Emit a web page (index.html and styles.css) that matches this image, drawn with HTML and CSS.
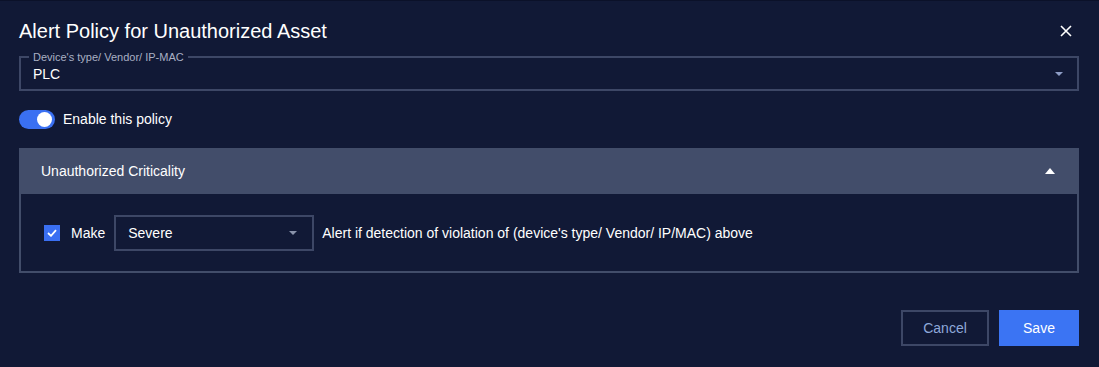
FILE: index.html
```html
<!DOCTYPE html>
<html>
<head>
    <title>Alert Policy for Unauthorized Asset</title>
    <link rel="stylesheet" href="styles.css">
</head>
<body>
    <div class="dialog">
        <div class="dialog-header">
            <h2 class="dialog-title">Alert Policy for Unauthorized Asset</h2>
            <button type="button" class="close-button" aria-label="Close">
                <svg width="12" height="12" viewBox="0 0 12 12">
                    <path d="M1 1 L11 11 M11 1 L1 11" stroke="#ffffff" stroke-width="1.6" fill="none"/>
                </svg>
            </button>
        </div>

        <fieldset class="select-field">
            <legend>Device's type/ Vendor/ IP-MAC</legend>
            <div class="select-row">
                <span>PLC</span>
                <span class="caret"></span>
            </div>
        </fieldset>

        <!-- Enable toggle -->
        <label class="toggle-row">
            <span class="toggle"><span class="knob"></span></span>
            <span>Enable this policy</span>
        </label>

        <div class="panel">
            <div class="panel-header">
                <span>Unauthorized Criticality</span>
                <span class="caret-up"></span>
            </div>
            <div class="panel-body">
                <span class="checkbox">
                    <svg width="10" height="8" viewBox="0 0 10 8">
                        <path d="M1 4 L4 6.8 L9 1.2" stroke="#ffffff" stroke-width="1.8" fill="none"/>
                    </svg>
                </span>
                <span class="make-label">Make</span>
                <div class="small-select">
                    <span>Severe</span>
                    <span class="caret gray"></span>
                </div>
                <span>Alert if detection of violation of (device's type/ Vendor/ IP/MAC) above</span>
            </div>
        </div>

        <div class="dialog-footer">
            <button type="button" class="cancel-button">Cancel</button>
            <button type="button" class="save-button">Save</button>
        </div>
    </div>
</body>
</html>
```

FILE: styles.css
```css
body {
    font-family: "Liberation Sans", Arial, sans-serif;
    margin: 0;
    padding: 0;
    background-color: #111936;
    color: #ffffff;
    font-size: 14px;
}

.dialog {
    border-top: 1px solid #0b1129;
    padding: 18px 20px 21px 19px;
}

.dialog-header {
    display: flex;
    justify-content: space-between;
    align-items: center;
    height: 24px;
}

.dialog-title {
    margin: 0;
    font-size: 20px;
    font-weight: normal;
    line-height: 24px;
}

.close-button {
    background: none;
    border: none;
    padding: 0;
    margin-right: 7px;
    width: 12px;
    height: 12px;
    display: flex;
    cursor: pointer;
}

.select-field {
    margin: 8px 0 0 0;
    padding: 3px 14px 7px 12px;
    border: 2px solid #3d4766;
    min-width: 0;
}

.select-field legend {
    font-size: 11px;
    line-height: 12px;
    color: #a9b0c4;
    padding: 0 4px;
    margin-left: -4px;
}

.select-row {
    display: flex;
    justify-content: space-between;
    align-items: center;
    line-height: 16px;
}

.caret {
    width: 0;
    height: 0;
    border-left: 4px solid transparent;
    border-right: 4px solid transparent;
    border-top: 4px solid #8e9dc6;
}

.caret.gray {
    border-top-color: #8a93ab;
}

.toggle-row {
    display: flex;
    align-items: center;
    gap: 8px;
    margin-top: 18px;
    height: 20px;
}

.toggle {
    width: 36px;
    height: 19px;
    border-radius: 10px;
    background-color: #3a70f2;
    display: flex;
    align-items: center;
    justify-content: flex-end;
    padding-right: 3px;
    box-sizing: border-box;
}

.knob {
    width: 15px;
    height: 15px;
    border-radius: 50%;
    background-color: #ffffff;
}

.panel {
    margin-top: 19px;
}

.panel-header {
    height: 46px;
    background-color: #424d6a;
    display: flex;
    justify-content: space-between;
    align-items: center;
    padding: 0 24px 0 22px;
}

.caret-up {
    width: 0;
    height: 0;
    border-left: 5px solid transparent;
    border-right: 5px solid transparent;
    border-bottom: 6px solid #ffffff;
}

.panel-body {
    border: 2px solid #424d6a;
    border-top: none;
    padding: 21px 23px 20px 23px;
    display: flex;
    align-items: center;
}

.checkbox {
    width: 16px;
    height: 16px;
    background-color: #3a6ff2;
    display: flex;
    align-items: center;
    justify-content: center;
    margin-right: 11px;
}

.make-label {
    margin-right: 9px;
}

.small-select {
    width: 200px;
    height: 36px;
    box-sizing: border-box;
    border: 2px solid #3d4766;
    display: flex;
    justify-content: space-between;
    align-items: center;
    padding: 0 15px 0 12px;
    margin-right: 8px;
}

.dialog-footer {
    display: flex;
    justify-content: flex-end;
    gap: 10px;
    margin-top: 37px;
}

.dialog-footer button {
    height: 36px;
    font-family: "Liberation Sans", Arial, sans-serif;
    font-size: 14px;
    cursor: pointer;
    box-sizing: border-box;
}

.cancel-button {
    width: 88px;
    background: none;
    border: 2px solid #3d4766;
    color: #8ea8da;
}

.save-button {
    width: 80px;
    background-color: #3b74f3;
    border: none;
    color: #ffffff;
}

.save-button:hover {
    background-color: #2f66e0;
}
```
